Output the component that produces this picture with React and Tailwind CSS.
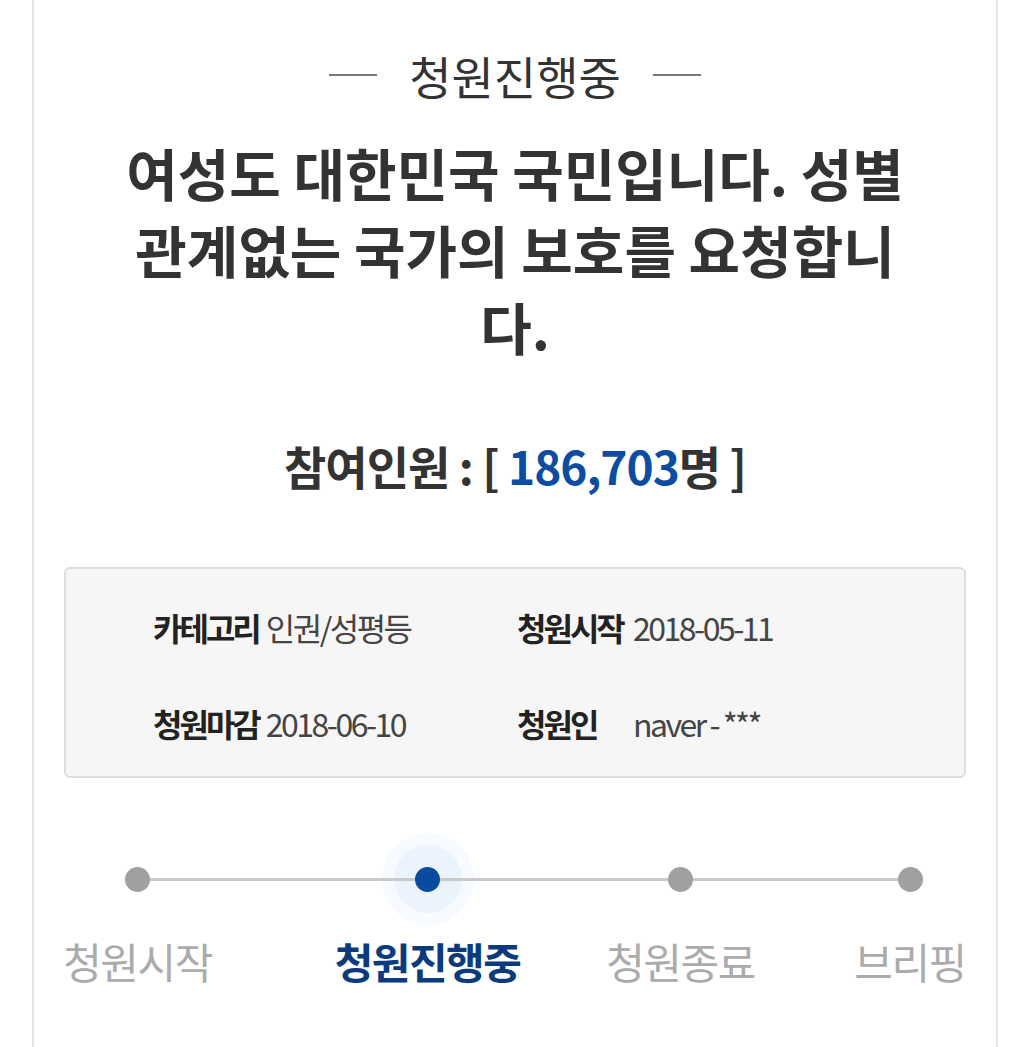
import React from 'react';

const FONT = { fontFamily: '"Noto Sans CJK KR", "Noto Sans", sans-serif' };

const INFO = [
  [
    { label: '카테고리', value: '인권/성평등' },
    { label: '청원시작', value: '2018-05-11' },
  ],
  [
    { label: '청원마감', value: '2018-06-10' },
    { label: '청원인', value: 'naver - ***' },
  ],
];

const STEPS = [
  { name: '청원시작', w: 'w-[149px]', ml: 'ml-0' },
  { name: '청원진행중', w: 'w-[189px]', ml: 'ml-[121px]', active: true },
  { name: '청원종료', w: 'w-[149px]', ml: 'ml-[84px]' },
  { name: '브리핑', w: 'w-[110px]', ml: 'ml-[100px]' },
];

export default function App() {
  return (
    <div className="min-h-[1047px] bg-white" style={FONT}>
      <div className="ml-[32px] w-[966px] min-h-[1047px] border-x-2 border-[#e6e6e6] pt-[45px]">
        {/* Status header */}
        <div className="flex items-center justify-center gap-[32px] h-[60px]">
          <span className="w-[48px] h-[2px] bg-[#777]" />
          <span className="text-[46px] leading-[60px] text-[#333]">청원진행중</span>
          <span className="w-[48px] h-[2px] bg-[#777]" />
        </div>

        {/* Title */}
        <h1 className="mx-auto mt-[28px] max-w-[820px] text-center text-[56px] leading-[77px] font-bold text-[#333]">
          여성도 대한민국 국민입니다. 성별 관계없는 국가의 보호를 요청합니다.
        </h1>

        {/* Count */}
        <div className="mt-[76px] text-center text-[46px] leading-[50px] font-bold tracking-[-1px] text-[#333]">
          참여인원 : [ <span className="text-[#0c4da1]">186,703</span>명 ]
        </div>

        {/* Info box */}
        <div className="ml-[30px] mt-[77px] w-[902px] rounded-[6px] border-2 border-[#dedede] bg-[#f6f6f6] pl-[87px] pt-[38px] pb-[33px] flex flex-col gap-[56px]">
          {INFO.map((row, i) => (
            <div key={i} className="flex h-[40px] items-center">
              {row.map((c, j) => (
                <div key={j} className={`flex items-center ${j === 0 ? 'w-[364px]' : ''}`}>
                  <span className={`${j === 1 ? 'w-[116px]' : 'mr-[7px]'} text-[32px] font-bold tracking-[-3px] text-[#222]`}>
                    {c.label}
                  </span>
                  <span className="text-[32px] tracking-[-2.5px] text-[#444]">{c.value}</span>
                </div>
              ))}
            </div>
          ))}
        </div>

        {/* Progress */}
        <div className="relative ml-[29px] mt-[55px] flex">
          {STEPS.map((s) => (
            <div key={s.name} className={`${s.w} ${s.ml} flex flex-col items-center`}>
              <div className="relative h-[92px] w-[92px] flex items-center justify-center">
                {s.active && (
                  <div className="absolute inset-0 rounded-full bg-[#f7fbff] flex items-center justify-center">
                    <div className="w-[68px] h-[68px] rounded-full bg-[#ebf4fd]" />
                  </div>
                )}
              </div>
              <div
                className={`mt-[11px] whitespace-nowrap text-[42px] leading-[50px] tracking-[-1.5px] ${
                  s.active ? 'font-bold text-[#0b3b7d]' : 'text-[#ababab]'
                }`}
              >
                {s.name}
              </div>
            </div>
          ))}
          {/* track line and dots drawn over the halo */}
          <div className="absolute left-[74px] top-[45px] w-[773px] h-[3px] bg-[#c9c9c9]" />
          <span className="absolute left-[62px] top-[34px] w-[25px] h-[25px] rounded-full bg-[#a0a0a0]" />
          <span className="absolute left-[352px] top-[34px] w-[25px] h-[25px] rounded-full bg-[#0a4a9f]" />
          <span className="absolute left-[605px] top-[34px] w-[25px] h-[25px] rounded-full bg-[#a0a0a0]" />
          <span className="absolute left-[835px] top-[34px] w-[25px] h-[25px] rounded-full bg-[#a0a0a0]" />
        </div>
      </div>
    </div>
  );
}
